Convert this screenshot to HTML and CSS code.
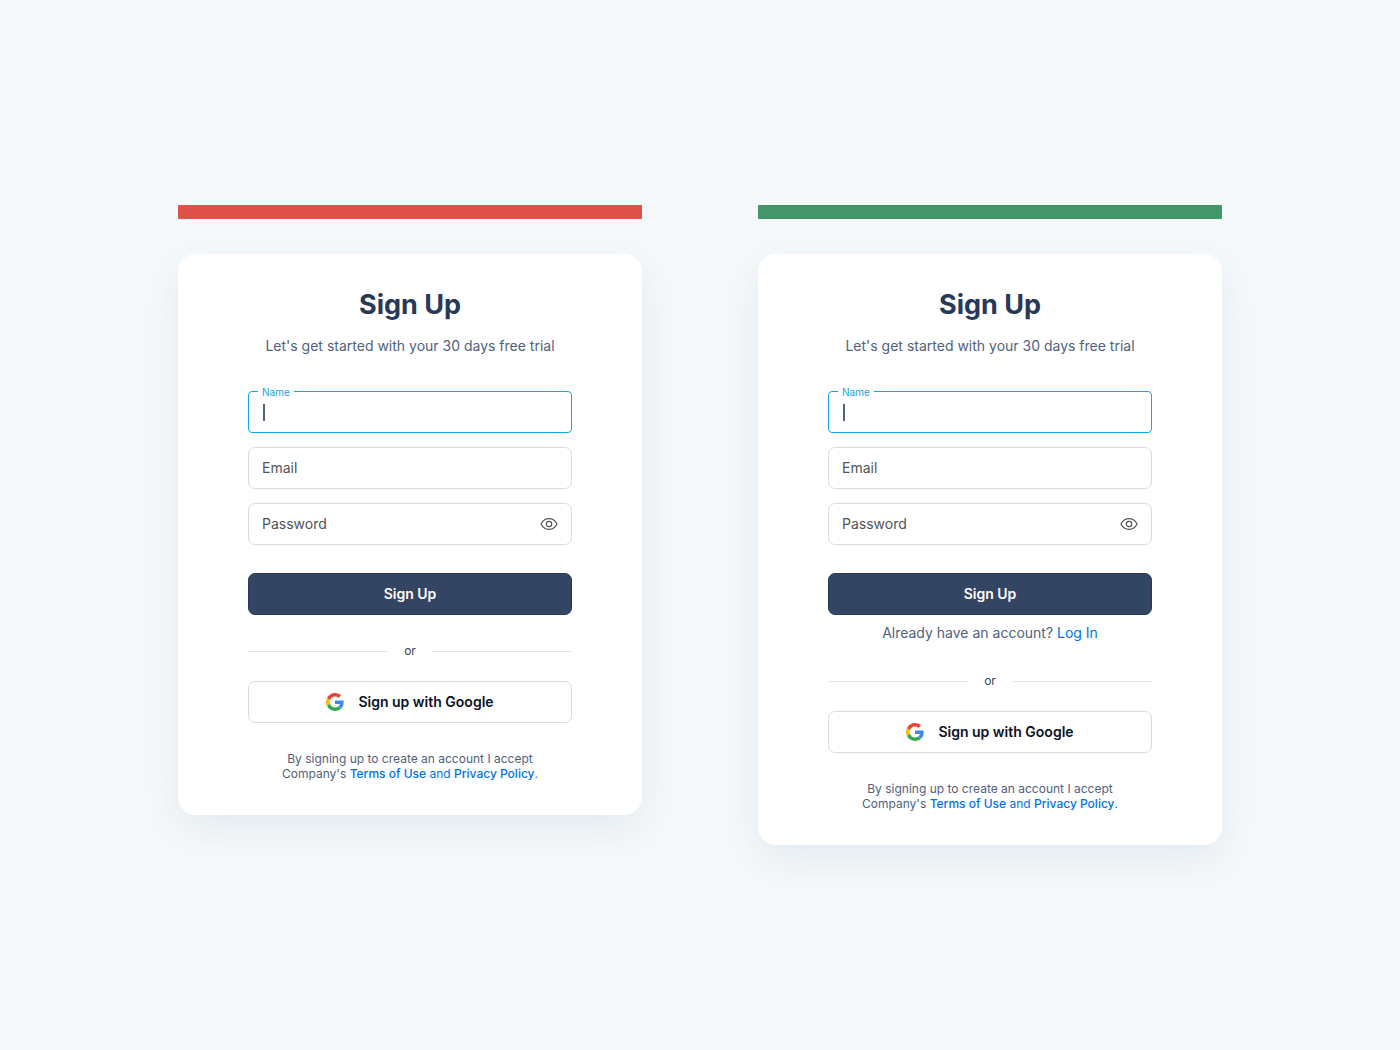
FILE: index.html
```html
<!DOCTYPE html>
<html lang="en">
<head>
<meta charset="utf-8">
<meta name="viewport" content="width=device-width, initial-scale=1.0">
<title>Sign Up</title>
<link rel="stylesheet" href="styles.css">
</head>
<body>

<!-- shared icons -->
<svg class="sprite" aria-hidden="true">
  <symbol id="eye" viewBox="0 0 18 14">
    <path d="M1 7C2.800 3.400 5.600 1.700 9 1.700S15.200 3.400 17 7C15.200 10.600 12.400 12.300 9 12.300S2.800 10.600 1 7Z"/>
    <circle cx="9" cy="7" r="2.700"/>
  </symbol>
  <symbol id="google" viewBox="0 0 48 48">
    <path fill="#ea4335" d="M24 9.500c3.540 0 6.710 1.220 9.210 3.600l6.850-6.850C35.900 2.380 30.470 0 24 0 14.620 0 6.510 5.380 2.560 13.220l7.980 6.190C12.430 13.720 17.740 9.500 24 9.500z"/>
    <path fill="#4285f4" d="M46.980 24.550c0-1.570-.15-3.090-.38-4.550H24v9.020h12.940c-.58 2.960-2.260 5.480-4.780 7.180l7.730 6c4.510-4.180 7.090-10.360 7.090-17.650z"/>
    <path fill="#fbbc05" d="M10.530 28.590c-.48-1.450-.76-2.990-.76-4.590s.27-3.140.76-4.590l-7.980-6.190C.92 16.460 0 20.120 0 24s.92 7.540 2.560 10.780l7.970-6.190z"/>
    <path fill="#34a853" d="M24 48c6.480 0 11.930-2.130 15.890-5.810l-7.730-6c-2.150 1.450-4.920 2.300-8.160 2.300-6.260 0-11.570-4.220-13.470-9.910l-7.980 6.190C6.510 42.620 14.620 48 24 48z"/>
  </symbol>
</svg>

<main class="compare">

  <!-- without log in link -->
  <section class="column">
    <div class="bar bar-bad"></div>
    <div class="card">
      <h1>Sign Up</h1>
      <p class="subtitle">Let's get started with your 30 days free trial</p>
      <form>
        <div class="field active">
          <input type="text" id="name-a">
          <label for="name-a">Name</label>
          <span class="caret"></span>
        </div>
        <div class="field">
          <input type="email" id="email-a" placeholder=" ">
          <label for="email-a">Email</label>
        </div>
        <div class="field">
          <input type="password" id="password-a" placeholder=" ">
          <label for="password-a">Password</label>
          <button type="button" class="show" aria-label="Show password"><svg><use href="#eye"/></svg></button>
        </div>
        <button type="submit" class="btn btn-primary">Sign Up</button>
        <div class="divider">or</div>
        <button type="button" class="btn btn-google"><svg><use href="#google"/></svg>Sign up with Google</button>
      </form>
      <p class="terms">By signing up to create an account I accept<br>Company's <a href="#">Terms of Use</a> <span>and</span> <a href="#">Privacy Policy</a>.</p>
    </div>
  </section>

  <!-- with log in link -->
  <section class="column">
    <div class="bar bar-good"></div>
    <div class="card">
      <h1>Sign Up</h1>
      <p class="subtitle">Let's get started with your 30 days free trial</p>
      <form>
        <div class="field active">
          <input type="text" id="name-b">
          <label for="name-b">Name</label>
          <span class="caret"></span>
        </div>
        <div class="field">
          <input type="email" id="email-b" placeholder=" ">
          <label for="email-b">Email</label>
        </div>
        <div class="field">
          <input type="password" id="password-b" placeholder=" ">
          <label for="password-b">Password</label>
          <button type="button" class="show" aria-label="Show password"><svg><use href="#eye"/></svg></button>
        </div>
        <button type="submit" class="btn btn-primary">Sign Up</button>
        <p class="login">Already have an account? <a href="#">Log In</a></p>
        <div class="divider">or</div>
        <button type="button" class="btn btn-google"><svg><use href="#google"/></svg>Sign up with Google</button>
      </form>
      <p class="terms">By signing up to create an account I accept<br>Company's <a href="#">Terms of Use</a> <span>and</span> <a href="#">Privacy Policy</a>.</p>
    </div>
  </section>

</main>

</body>
</html>
```
FILE: styles.css
```css
* {box-sizing: border-box;}

body {
  margin: 0;
  min-height: 100vh;
  display: flex;
  align-items: center;
  justify-content: center;
  font-family: Inter, "Liberation Sans", sans-serif;
  font-size: 14px;
  line-height: 20px;
  background: #f5f9fc;
  color: #50617d;
}

h1, p {
  margin: 0;
}

a {
  color: #0073e6;
  text-decoration: none;
}

.sprite {
  position: absolute;
  width: 0;
  height: 0;
}

.compare {
  display: flex;
  align-items: flex-start;
  gap: 116px;
  width: 100%;
  max-width: 1044px;
}

.column {
  flex: 1;
}

.bar {
  height: 14px;
  margin-bottom: 35px;
  border-radius: 1px;
}

.bar-bad {
  background: #df524a;
}

.bar-good {
  background: #43966c;
}

.card {
  padding: 34px 70px;
  border-radius: 18px;
  background: #fff;
  box-shadow: 0 14px 42px rgba(50, 75, 105, 0.09);
  text-align: center;
}

h1 {
  font-size: 27px;
  line-height: 34px;
  font-weight: 700;
  color: #273957;
}

.subtitle {
  margin: 14px 0 35px;
}

/* fields */
.field {
  position: relative;
  margin-bottom: 14px;
}

.field input {
  display: block;
  width: 100%;
  height: 42px;
  padding: 0 13px;
  border: 1px solid #d9dae6;
  border-radius: 7px;
  background: #fff;
  font: inherit;
  color: #273957;
  outline: none;
}

/* label rests inside the box while it is empty */
.field label {
  position: absolute;
  top: 11px;
  left: 10px;
  padding: 0 4px;
  background: #fff;
  color: #505358;
  cursor: text;
}

.field.active input,
.field input:focus {
  border-color: #14a4e9;
  border-radius: 4px;
}

/* and moves over the top border when active or filled */
.field.active label,
.field input:focus + label,
.field input:not(:placeholder-shown) + label {
  top: -6px;
  font-size: 10px;
  line-height: 14px;
  color: #14a4e9;
}

.caret {
  position: absolute;
  top: 13px;
  left: 15px;
  width: 2px;
  height: 17px;
  background: #53617b;
}

.show {
  position: absolute;
  top: 11px;
  right: 14px;
  display: flex;
  padding: 3px 0;
  border: 0;
  background: none;
  cursor: pointer;
}

.show svg {
  width: 18px;
  height: 14px;
  fill: none;
  stroke: #505358;
  stroke-width: 1.2;
}

/* buttons */
.btn {
  display: flex;
  align-items: center;
  justify-content: center;
  gap: 14px;
  width: 100%;
  height: 42px;
  border-radius: 7px;
  font: inherit;
  font-weight: 600;
  cursor: pointer;
}

.btn-primary {
  margin-top: 28px;
  border: 1px solid #263b5c;
  background: #344563;
  color: #fff;
}

.btn-google {
  border: 1px solid #d9dae6;
  background: #fff;
  color: #091128;
}

.btn-google svg {
  width: 18px;
  height: 18px;
}

.login {
  margin: 8px 0 28px;
}

.divider {
  display: flex;
  align-items: center;
  gap: 16px;
  margin: 26px 0 20px;
  font-size: 12px;
  color: #344563;
}

.divider::before,
.divider::after {
  content: "";
  flex: 1;
  height: 1px;
  background: #e3e5ed;
}

.terms {
  margin-top: 28px;
  font-size: 12px;
  line-height: 15px;
}

.terms a {
  font-weight: 500;
}

.terms span {
  color: #0073e6;
}
```
